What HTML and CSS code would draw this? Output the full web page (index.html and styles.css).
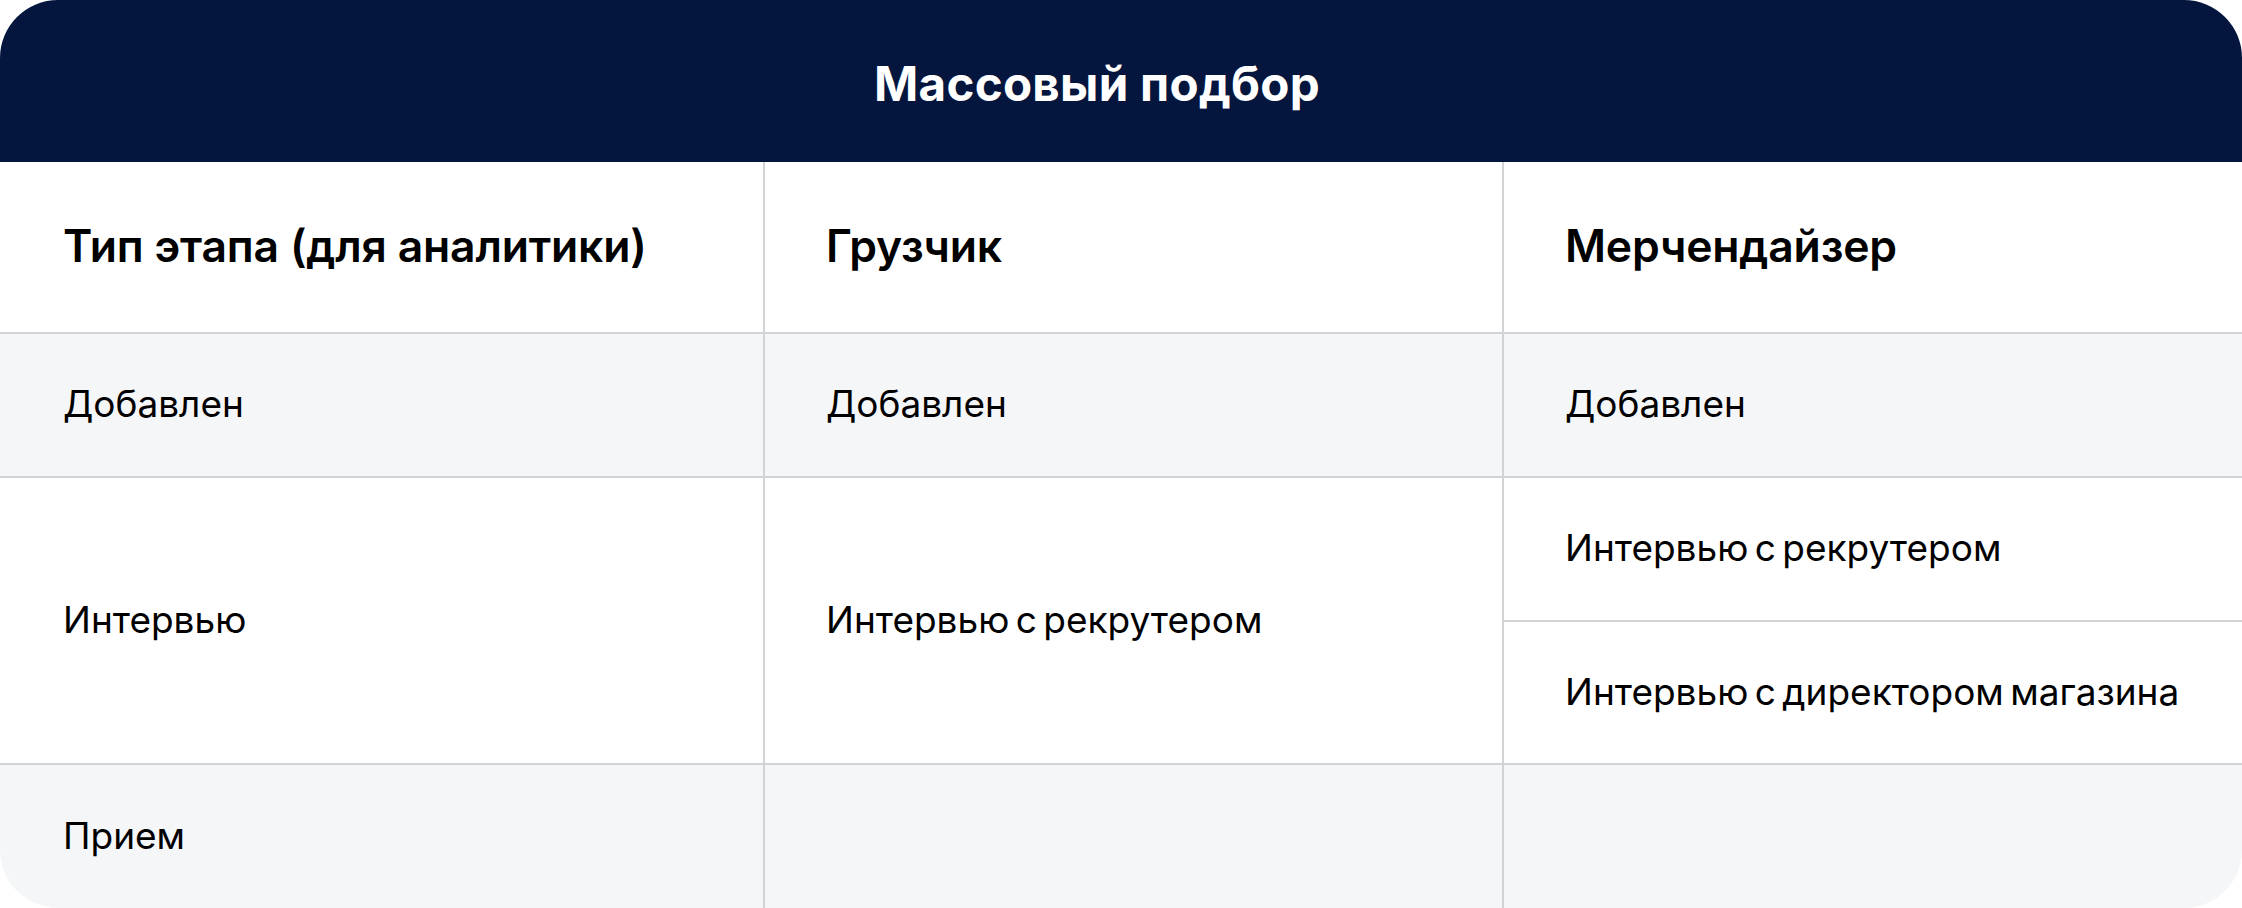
FILE: index.html
```html
<!DOCTYPE html>
<html lang="ru">
<head>
<meta charset="utf-8">
<title>Массовый подбор</title>
<link rel="stylesheet" href="styles.css">
</head>
<body>
<div class="table">
  <div class="title">Массовый подбор</div>

  <div class="cell head first">Тип этапа (для аналитики)</div>
  <div class="cell head">Грузчик</div>
  <div class="cell head">Мерчендайзер</div>

  <div class="cell gray first">Добавлен</div>
  <div class="cell gray">Добавлен</div>
  <div class="cell gray">Добавлен</div>

  <div class="cell first span2">Интервью</div>
  <div class="cell span2">Интервью с рекрутером</div>
  <div class="cell">Интервью с рекрутером</div>
  <div class="cell col3">Интервью с директором магазина</div>

  <div class="cell gray first">Прием</div>
  <div class="cell gray"></div>
  <div class="cell gray"></div>
</div>
</body>
</html>
```

FILE: styles.css
```css
* { box-sizing: border-box; }
html, body { margin: 0; padding: 0; background: #ffffff; }
body {
  font-family: Inter, "Noto Sans", sans-serif;
  color: #000000;
}
.table {
  width: 2242px;
  height: 908px;
  display: grid;
  grid-template-columns: 763px 739px 740px;
  grid-template-rows: 162px 170px 144px 144px 143px 145px;
  border-radius: 58px;
  overflow: hidden;
  background: #ffffff;
}
.title {
  grid-column: 1 / -1;
  background: #04153e;
  color: #ffffff;
  font-weight: 700;
  font-size: 47.5px;
  display: flex;
  align-items: center;
  justify-content: center;
  padding-right: 48px;
  padding-top: 4px;
  letter-spacing: 0.3px;
}
.cell {
  display: flex;
  align-items: center;
  padding-left: 61px;
  padding-bottom: 3px;
  border-left: 2px solid #d2d3d7;
  border-top: 2px solid #d2d3d7;
  font-size: 37px;
  font-weight: 400;
  word-spacing: -4px;
}
.cell.first { border-left: none; padding-left: 63px; }
.cell.head {
  border-top: none;
  font-weight: 600;
  font-size: 44.5px;
  letter-spacing: -0.2px;
  word-spacing: 0;
}
.cell.gray { background: #f5f6f8; }
.cell.span2 { grid-row: span 2; }
.cell.col3 { grid-column: 3; }
```
